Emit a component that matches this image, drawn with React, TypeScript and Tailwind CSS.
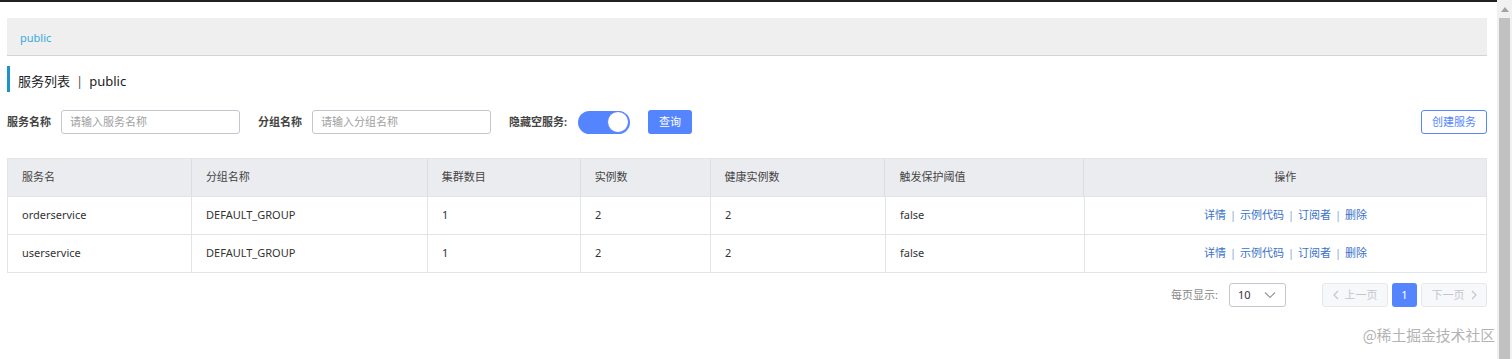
import React from "react";

const font = { fontFamily: '"Noto Sans", "Noto Sans CJK SC", sans-serif' };

const cols = [185, 236, 153, 130, 175, 199, 402];
const headers = ["服务名", "分组名称", "集群数目", "实例数", "健康实例数", "触发保护阈值", "操作"];
const rows = [
  ["orderservice", "DEFAULT_GROUP", "1", "2", "2", "false"],
  ["userservice", "DEFAULT_GROUP", "1", "2", "2", "false"],
];

function Ops() {
  return (
    <div className="flex items-center justify-center gap-[4px] text-[#3a73c9]">
      <span>详情</span>
      <span className="text-[#8aa6cf]">|</span>
      <span>示例代码</span>
      <span className="text-[#8aa6cf]">|</span>
      <span>订阅者</span>
      <span className="text-[#8aa6cf]">|</span>
      <span>删除</span>
    </div>
  );
}

export default function App() {
  return (
    <div className="flex h-[359px] w-[1512px] overflow-hidden bg-white" style={font}>
      <div className="relative flex w-[1497px] flex-col">
        <div className="h-[2px] bg-[#222]" />
        <div className="flex flex-col pl-[7px] pr-[10px] pt-[16px]">
          <div className="flex h-[38px] items-center border-b border-[#d4d4d4] bg-[#efefef] pl-[13px] pt-[4px] text-[11px] text-[#3aa9dc]">
            public
          </div>
          <div className="mt-[10px] flex h-[26px] items-center border-l-[3px] border-[#1b95c6] pl-[8px] pt-[6px] text-[13px] text-[#222]">
            <span>服务列表</span>
            <span className="mx-[6px] text-[#555]">|</span>
            <span>public</span>
          </div>
          <div className="mt-[18px] flex h-[24px] items-center text-[11px]">
            <span className="w-[54px] font-bold text-[#444]">服务名称</span>
            <div className="flex h-[24px] w-[179px] items-center rounded-[3px] border border-[#c4c6cf] pl-[8px] text-[#a0a0a0]">
              请输入服务名称
            </div>
            <span className="ml-[18px] w-[54px] font-bold text-[#444]">分组名称</span>
            <div className="flex h-[24px] w-[179px] items-center rounded-[3px] border border-[#c4c6cf] pl-[8px] text-[#a0a0a0]">
              请输入分组名称
            </div>
            <span className="ml-[18px] font-bold text-[#444]">隐藏空服务:</span>
            <div className="ml-[11px] flex h-[23px] w-[52px] items-center justify-end rounded-full bg-[#5584ff] pr-[1px]">
              <div className="h-[22px] w-[22px] rounded-full border border-[#5584ff] bg-white" />
            </div>
            <div className="ml-[18px] flex h-[24px] w-[44px] items-center justify-center rounded-[3px] bg-[#5584ff] text-white">
              查询
            </div>
            <div className="ml-auto flex h-[24px] w-[66px] items-center justify-center rounded-[3px] border border-[#5584ff] text-[#5584ff]">
              创建服务
            </div>
          </div>
          <div className="mt-[24px] border border-[#e3e4e8] text-[11px] text-[#333]">
            <div className="flex h-[37px] bg-[#ebecf0]">
              {headers.map((h, i) => (
                <div
                  key={h}
                  className={`flex items-center px-[14px] text-[#444] ${i < 6 ? "border-r border-[#dcdde1]" : "justify-center"}`}
                  style={{ width: cols[i] - (i === 0 ? 1 : 0) }}
                >
                  {h}
                </div>
              ))}
            </div>
            {rows.map((r, ri) => (
              <div key={ri} className="flex h-[38px] border-t border-[#e3e4e8]">
                {r.map((c, i) => (
                  <div
                    key={i}
                    className="flex items-center border-r border-[#e3e4e8] px-[14px]"
                    style={{ width: cols[i] - (i === 0 ? 1 : 0) }}
                  >
                    {c}
                  </div>
                ))}
                <div className="flex flex-1 items-center justify-center">
                  <Ops />
                </div>
              </div>
            ))}
          </div>
          <div className="mt-[10px] flex h-[24px] items-center justify-end text-[11px]">
            <span className="text-[#888]">每页显示:</span>
            <div className="ml-[11px] flex h-[24px] w-[57px] items-center justify-between rounded-[3px] border border-[#c4c6cf] pl-[8px] pr-[9px] text-[#333]">
              <span>10</span>
              <svg width="12" height="8" viewBox="0 0 12 8" fill="none" stroke="#999" strokeWidth="1.2">
                <path d="M1 1.5 L6 6.5 L11 1.5" />
              </svg>
            </div>
            <div className="ml-[36px] flex h-[24px] w-[66px] items-center justify-center gap-[6px] rounded-[3px] border border-[#e6e7eb] bg-[#f7f8fa] text-[#c4c6cf]">
              <svg width="6" height="10" viewBox="0 0 6 10" fill="none" stroke="#c4c6cf" strokeWidth="1.2">
                <path d="M5 1 L1 5 L5 9" />
              </svg>
              <span>上一页</span>
            </div>
            <div className="ml-[4px] flex h-[24px] w-[25px] items-center justify-center rounded-[3px] bg-[#5584ff] text-white">
              1
            </div>
            <div className="ml-[4px] flex h-[24px] w-[66px] items-center justify-center gap-[6px] rounded-[3px] border border-[#e6e7eb] bg-[#f7f8fa] text-[#c4c6cf]">
              <span>下一页</span>
              <svg width="6" height="10" viewBox="0 0 6 10" fill="none" stroke="#c4c6cf" strokeWidth="1.2">
                <path d="M1 1 L5 5 L1 9" />
              </svg>
            </div>
          </div>
        </div>
        <div className="absolute right-[2px] top-[324px] text-[14.8px] leading-[22px] text-[#b3b3b3]" style={{ fontFamily: '"Noto Sans CJK SC", sans-serif' }}>
          @稀土掘金技术社区
        </div>
      </div>
      <div className="flex w-[15px] flex-col items-center bg-[#f1f1f1] pt-[2px]">
        <div className="flex h-[15px] w-full items-center justify-center">
          <svg width="8" height="5" viewBox="0 0 8 5">
            <path d="M0 5 L4 0 L8 5 Z" fill="#a3a3a3" />
          </svg>
        </div>
        <div className="mt-[1px] w-[11px] flex-1 bg-[#c1c1c1]" />
      </div>
    </div>
  );
}
